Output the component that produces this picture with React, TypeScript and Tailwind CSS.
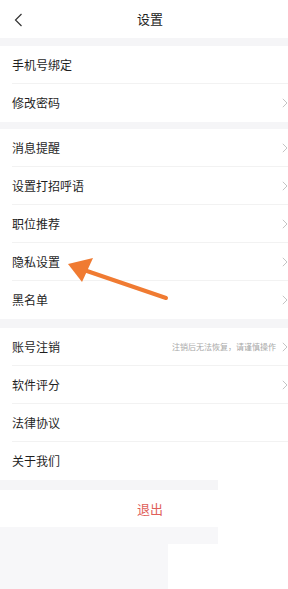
import React from "react";

type Row = { label: string; hint?: string; arrow?: boolean };

const section1: Row[] = [
  { label: "手机号绑定" },
  { label: "修改密码", arrow: true },
];
const section2: Row[] = [
  { label: "消息提醒", arrow: true },
  { label: "设置打招呼语", arrow: true },
  { label: "职位推荐", arrow: true },
  { label: "隐私设置", arrow: true },
  { label: "黑名单", arrow: true },
];
const section3: Row[] = [
  { label: "账号注销", hint: "注销后无法恢复，请谨慎操作", arrow: true },
  { label: "软件评分", arrow: true },
  { label: "法律协议" },
  { label: "关于我们" },
];

const Chevron = () => (
  <svg width="6" height="10" viewBox="0 0 6 10" className="shrink-0">
    <path d="M0.8 0.8 L5 5 L0.8 9.2" fill="none" stroke="#c4c4c4" strokeWidth="1" />
  </svg>
);

const Section = ({ rows }: { rows: Row[] }) => (
  <div className="bg-white">
    {rows.map((r, i) => (
      <div key={r.label} className="pl-3">
        <div
          className={
            "flex h-[38px] items-center " +
            (i < rows.length - 1 ? "border-b border-[#f2f2f2]" : "")
          }
        >
          <span className="flex-1 text-[12px] text-[#1f1f1f]">{r.label}</span>
          {r.hint && (
            <span className="mr-[6px] text-[8px] text-[#a8a8a8]">{r.hint}</span>
          )}
          {r.arrow && <Chevron />}
        </div>
      </div>
    ))}
  </div>
);

const App = () => {
  return (
    <div
      className="relative flex h-[589px] w-[288px] flex-col overflow-hidden bg-white"
      style={{ fontFamily: '"Noto Sans CJK SC", "Noto Sans", sans-serif' }}
    >
      <div className="relative flex h-[38px] shrink-0 items-center justify-center bg-white">
        <svg width="9" height="14" viewBox="0 0 9 14" className="absolute left-[14px] top-[13px]">
          <path d="M7.5 1 L1.5 7 L7.5 13" fill="none" stroke="#333" strokeWidth="1.2" />
        </svg>
        <span className="ml-[12px] text-[13px] text-[#222]">设置</span>
      </div>
      <div className="h-[8px] shrink-0 bg-[#f5f5f7]" />
      <Section rows={section1} />
      <div className="h-[7px] shrink-0 bg-[#f5f5f7]" />
      <Section rows={section2} />
      <div className="h-[9px] shrink-0 bg-[#f5f5f7]" />
      <Section rows={section3} />
      <div className="h-[10px] w-[218px] shrink-0 bg-[#f5f5f7]" />
      <div className="flex h-[37px] shrink-0 items-center justify-center bg-white">
        <span className="ml-[12px] text-[13px] text-[#e0605a]">退出</span>
      </div>
      <div className="h-[17px] w-[218px] shrink-0 bg-[#f7f7f9]" />
      <div className="w-[168px] flex-1 bg-[#f7f7f9]" />

      <svg
        className="absolute left-0 top-0"
        width="288"
        height="589"
        viewBox="0 0 288 589"
      >
        <line x1="166" y1="298" x2="84" y2="270" stroke="#f07b32" strokeWidth="4" strokeLinecap="round" />
        <polygon points="68,264 93,258 82,282" fill="#f07b32" />
      </svg>
    </div>
  );
};

export default App;
